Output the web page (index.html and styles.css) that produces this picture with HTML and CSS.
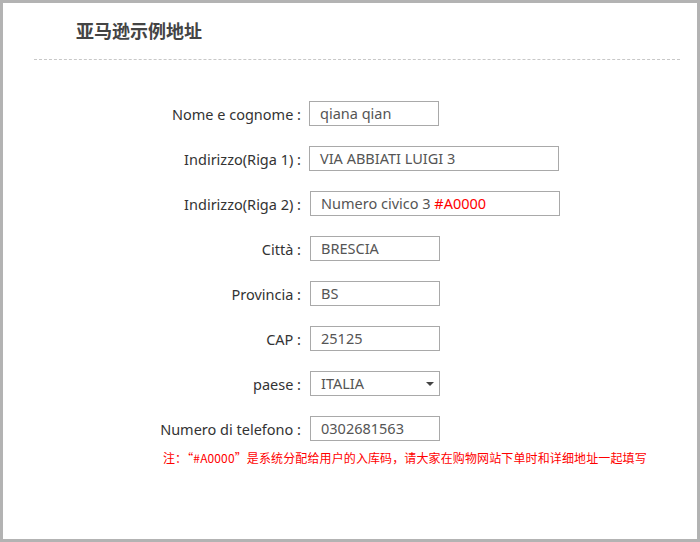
FILE: index.html
```html
<!DOCTYPE html>
<html lang="zh-CN">
<head>
<meta charset="utf-8">
<title>亚马逊示例地址</title>
<link rel="stylesheet" href="styles.css">
</head>
<body>
<div class="page">
  <div class="header">
    <h1 class="title">亚马逊示例地址</h1>
  </div>
  <div class="divider"></div>
  <div class="form">
    <div class="row">
      <div class="label">Nome e cognome :</div>
      <div class="field short">qiana qian</div>
    </div>
    <div class="row">
      <div class="label">Indirizzo(Riga 1) :</div>
      <div class="field long">VIA ABBIATI LUIGI 3</div>
    </div>
    <div class="row">
      <div class="label">Indirizzo(Riga 2) :</div>
      <div class="field long shift">Numero civico 3 <span class="red">#A0000</span></div>
    </div>
    <div class="row">
      <div class="label">Città :</div>
      <div class="field short shift">BRESCIA</div>
    </div>
    <div class="row">
      <div class="label">Provincia :</div>
      <div class="field short shift">BS</div>
    </div>
    <div class="row">
      <div class="label">CAP :</div>
      <div class="field short shift">25125</div>
    </div>
    <div class="row">
      <div class="label">paese :</div>
      <div class="field short shift select">ITALIA<span class="arrow"></span></div>
    </div>
    <div class="row">
      <div class="label">Numero di telefono :</div>
      <div class="field short shift">0302681563</div>
    </div>
    <p class="note">注：“#A0000”是系统分配给用户的入库码，请大家在购物网站下单时和详细地址一起填写</p>
  </div>
</div>
</body>
</html>
```
FILE: styles.css
```css
* { box-sizing: border-box; }
html, body { margin: 0; padding: 0; }
body {
  background: #fff;
  font-family: "Noto Sans", "Noto Sans CJK SC", sans-serif;
  color: #333;
}
.page {
  width: 700px;
  height: 542px;
  border: 3px solid #b3b3b3;
  background: #fff;
}
.header {
  padding: 13px 0 0 73px;
  height: 56px;
}
.title {
  margin: 0;
  font-family: "Noto Sans CJK SC", sans-serif;
  font-size: 18px;
  font-weight: bold;
  color: #444;
  line-height: 28px;
}
.divider {
  margin: 0 17px 0 31px;
  border-top: 1px dashed #c8c8c8;
}
.form {
  padding-top: 41px;
  display: flex;
  flex-direction: column;
  gap: 20px;
}
.row {
  display: flex;
  align-items: center;
  height: 25px;
}
.label {
  width: 298px;
  text-align: right;
  font-size: 14.5px;
  color: #333;
  white-space: nowrap;
}
.field {
  margin-left: 8px;
  height: 25px;
  border: 1px solid #a9a9a9;
  padding: 0 10px;
  font-size: 14.5px;
  line-height: 23px;
  color: #555;
  white-space: nowrap;
  position: relative;
}
.field.shift { margin-left: 9px; }
.short { width: 130px; }
.long { width: 250px; }
.red { color: #ff0000; }
.arrow {
  position: absolute;
  right: 5px;
  top: 10px;
  width: 0;
  height: 0;
  border-left: 4px solid transparent;
  border-right: 4px solid transparent;
  border-top: 4px solid #444;
}
.note {
  margin: -11px 0 0 160px;
  font-family: "Noto Sans CJK SC", sans-serif;
  font-size: 12px;
  letter-spacing: 0.12px;
  color: #ff0000;
  line-height: 16px;
}
```
